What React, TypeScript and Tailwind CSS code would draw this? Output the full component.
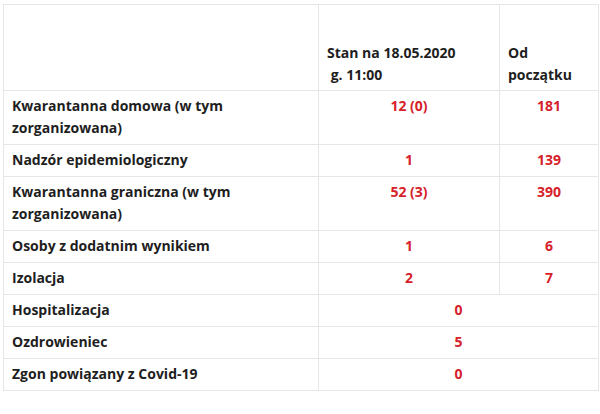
const rows: { label: string; now?: string; total?: string; merged?: string; tall?: boolean }[] = [
  { label: 'Kwarantanna domowa (w tym zorganizowana)', now: '12 (0)', total: '181', tall: true },
  { label: 'Nadzór epidemiologiczny', now: '1', total: '139' },
  { label: 'Kwarantanna graniczna (w tym zorganizowana)', now: '52 (3)', total: '390', tall: true },
  { label: 'Osoby z dodatnim wynikiem', now: '1', total: '6' },
  { label: 'Izolacja', now: '2', total: '7' },
  { label: 'Hospitalizacja', merged: '0' },
  { label: 'Ozdrowieniec', merged: '5' },
  { label: 'Zgon powiązany z Covid-19', merged: '0' },
];

export default function App() {
  return (
    <div className="w-[600px] h-[414px] bg-white pt-[4px] pl-[3px] font-['Open_Sans',sans-serif] text-[14px] leading-[22px] font-bold text-[#1e1e1e]">
      <table className="w-[595px] border-collapse table-fixed">
        <colgroup>
          <col className="w-[315px]" />
          <col className="w-[181px]" />
          <col className="w-[99px]" />
        </colgroup>
        <tbody>
          <tr className="h-[86px]">
            <td className="border border-[#e6e6e6]" />
            <td className="border border-[#e6e6e6] px-2 pb-[4px] align-bottom whitespace-pre">
              {'Stan na 18.05.2020\n g. 11:00'}
            </td>
            <td className="border border-[#e6e6e6] px-2 pb-[4px] align-bottom">Od początku</td>
          </tr>
          {rows.map((r) => (
            <tr key={r.label} className={r.tall ? 'h-[54px]' : 'h-[32px]'}>
              <td className="border border-[#e6e6e6] px-2 py-[4px] align-top">{r.label}</td>
              {r.merged !== undefined ? (
                <td colSpan={2} className="border border-[#e6e6e6] px-2 py-[4px] align-top text-center text-[#d6212b]">
                  {r.merged}
                </td>
              ) : (
                <>
                  <td className="border border-[#e6e6e6] px-2 py-[4px] align-top text-center text-[#d6212b]">{r.now}</td>
                  <td className="border border-[#e6e6e6] px-2 py-[4px] align-top text-center text-[#d6212b]">{r.total}</td>
                </>
              )}
            </tr>
          ))}
        </tbody>
      </table>
    </div>
  );
}
